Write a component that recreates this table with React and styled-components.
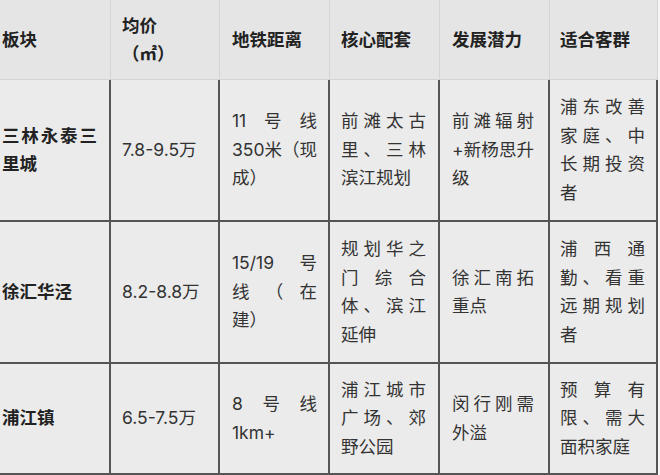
import React from "react";
import styled, { createGlobalStyle } from "styled-components";

const Global = createGlobalStyle`
  html, body { margin: 0; padding: 0; background: #f6f6f6; overflow: hidden; }
  body { font-family: Inter, "Noto Sans CJK SC", "Noto Sans", sans-serif; }
`;

const Frame = styled.div`
  width: 660px;
  height: 475px;
  overflow: hidden;
`;

const Grid = styled.div`
  margin-left: -10px;
  display: grid;
  grid-template-columns: 121px 109px 110px 110px 110px 108px;
  grid-template-rows: 80px 142px 142px 111px;
  width: 668px;
`;

const HeadCell = styled.div`
  box-sizing: border-box;
  background: #e5e5e5;
  border-right: 1px solid #d4d4d4;
  border-bottom: 1px solid #d4d4d4;
  padding: 0 ${(p) => p.$pr}px 0 ${(p) => p.$pl}px;
  display: flex;
  flex-direction: column;
  justify-content: center;
  font-size: 17.5px;
  font-weight: 700;
  line-height: 28px;
  color: #222;
`;

const BodyCell = styled.div`
  box-sizing: border-box;
  background: #ebebeb;
  border-right: 2px solid #555;
  border-bottom: 2px solid #555;
  padding: 0 ${(p) => p.$pr}px 0 ${(p) => p.$pl}px;
  display: flex;
  flex-direction: column;
  justify-content: center;
  font-size: 17.5px;
  font-weight: ${(p) => (p.$bold ? 700 : 400)};
  line-height: 28.5px;
  color: ${(p) => (p.$bold ? "#222" : "#333")};
`;

const Line = styled.span`
  display: block;
  white-space: nowrap;
  text-align: justify;
  text-align-last: ${(p) => (p.$last ? "left" : "justify")};
`;

const pads = [
  [12, 12],
  [11, 12],
  [12, 11],
  [11, 12],
  [12, 14],
  [10, 11],
];

const header = [
  ["板块"],
  ["均价", "（㎡）"],
  ["地铁距离"],
  ["核心配套"],
  ["发展潜力"],
  ["适合客群"],
];

const rows = [
  [
    ["三林永泰三", "里城"],
    ["7.8-9.5万"],
    ["11号线", "350米（现", "成）"],
    ["前滩太古", "里、三林", "滨江规划"],
    ["前滩辐射", "+新杨思升", "级"],
    ["浦东改善", "家庭、中", "长期投资", "者"],
  ],
  [
    ["徐汇华泾"],
    ["8.2-8.8万"],
    ["15/19号", "线（在", "建）"],
    ["规划华之", "门综合", "体、滨江", "延伸"],
    ["徐汇南拓", "重点"],
    ["浦西通", "勤、看重", "远期规划", "者"],
  ],
  [
    ["浦江镇"],
    ["6.5-7.5万"],
    ["8号线", "1km+"],
    ["浦江城市", "广场、郊", "野公园"],
    ["闵行刚需", "外溢"],
    ["预算有", "限、需大", "面积家庭"],
  ],
];

export default function App() {
  return (
    <Frame>
      <Global />
      <Grid>
        {header.map((lines, i) => (
          <HeadCell key={"h" + i} $pl={pads[i][0]} $pr={pads[i][1]}>
            {lines.map((t, j) => (
              <Line key={j} $last>
                {t}
              </Line>
            ))}
          </HeadCell>
        ))}
        {rows.map((row, r) =>
          row.map((lines, i) => (
            <BodyCell
              key={r + "-" + i}
              $bold={i === 0}
              $pl={pads[i][0]}
              $pr={pads[i][1]}
            >
              {lines.map((t, j) => (
                <Line key={j} $last={j === lines.length - 1}>
                  {t}
                </Line>
              ))}
            </BodyCell>
          ))
        )}
      </Grid>
    </Frame>
  );
}
